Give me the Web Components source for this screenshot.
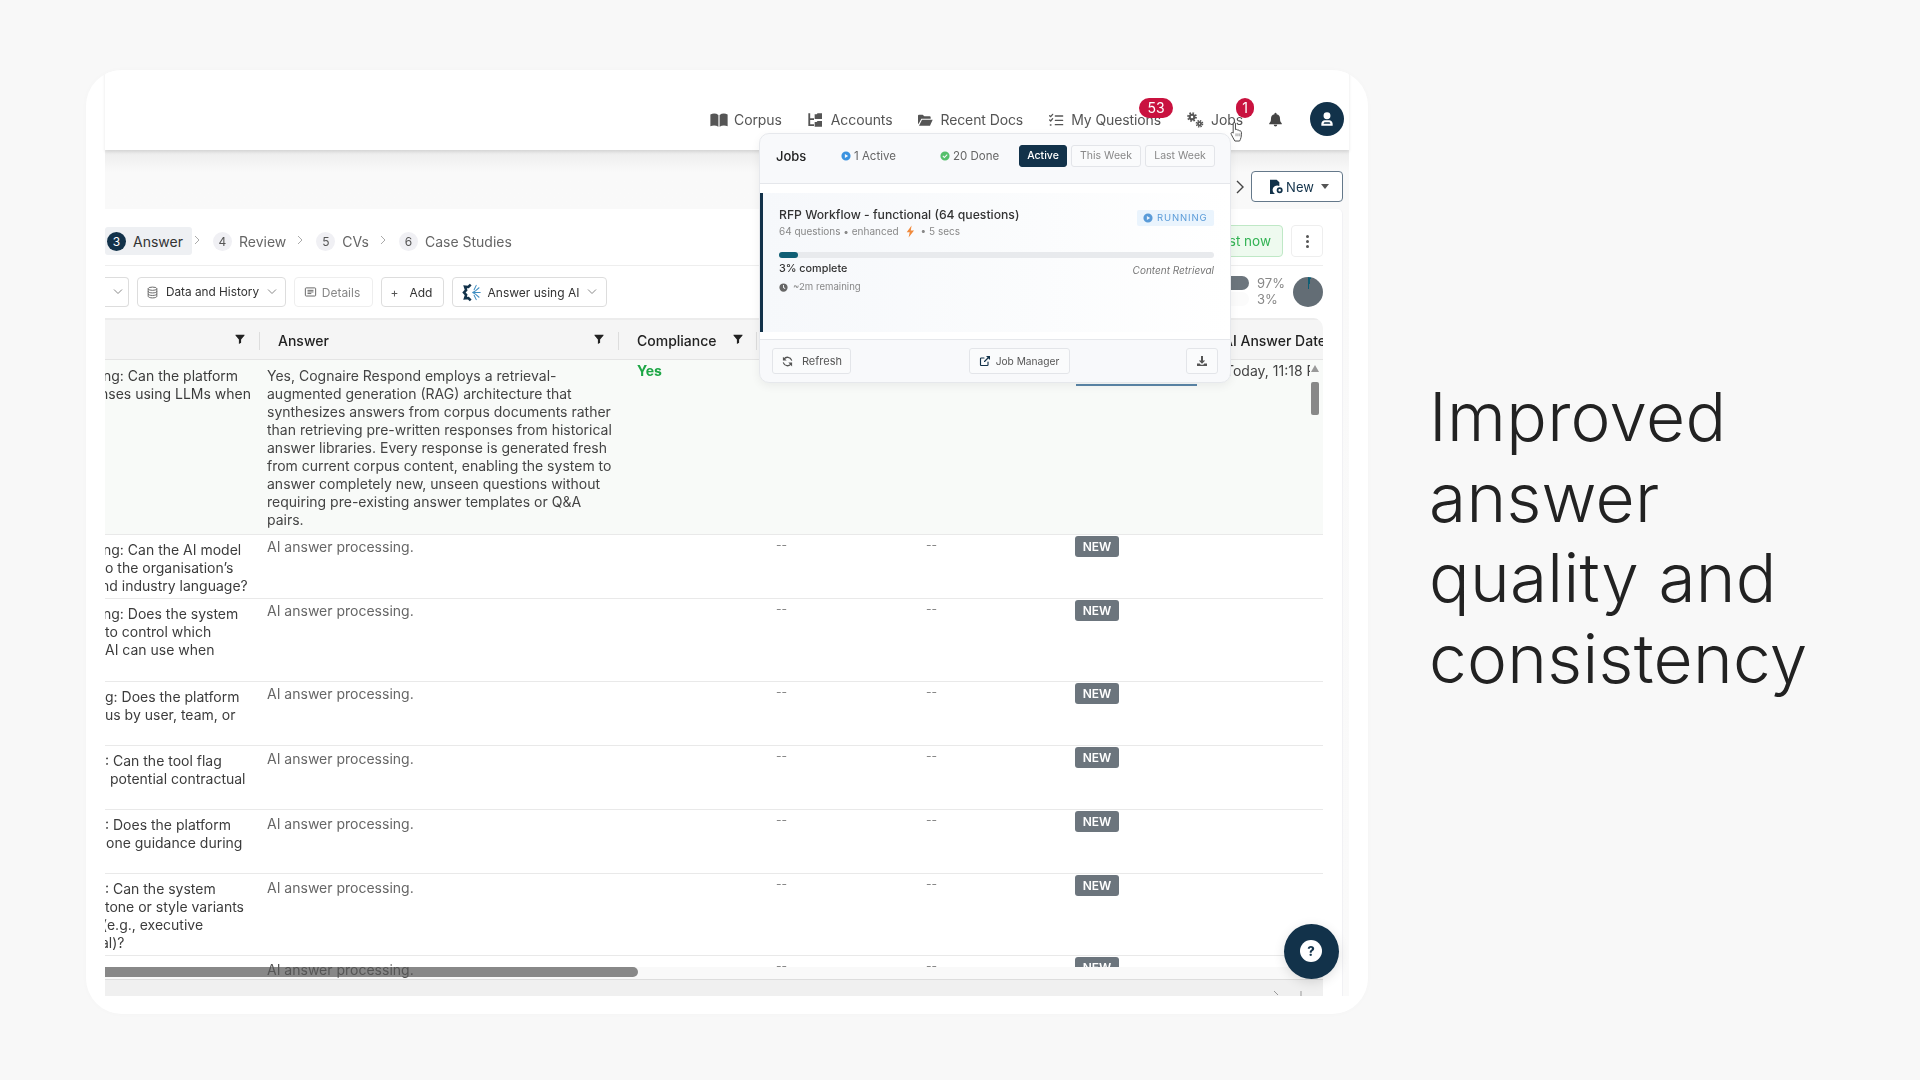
<!DOCTYPE html>
<html lang="en"><head><meta charset="utf-8"><title>Improved answer quality</title>
<style>
html,body{margin:0;padding:0;background:#f8f8f8}
body{font-family:Inter,"Liberation Sans",sans-serif;width:1920px;height:1080px;overflow:hidden}
</style></head><body>
<slide-page>
  <app-card>
    <top-nav>
      <nav-item icon="book" s="18" g="6">Corpus</nav-item>
      <nav-item icon="tree" s="16" g="8">Accounts</nav-item>
      <nav-item icon="folder" s="16" g="7">Recent Docs</nav-item>
      <nav-item icon="listcheck" s="16" g="7" badge="53" bw="34" br="-12">My Questions</nav-item>
      <nav-item icon="gears" s="18" g="7" badge="1" bw="18" br="-11">Jobs</nav-item>
    </top-nav>
    <work-area>
      <job-panel>
        <step-bar slot="steps">
          <step-item n="3" active>Answer</step-item>
          <step-item n="4">Review</step-item>
          <step-item n="5">CVs</step-item>
          <step-item n="6" last>Case Studies</step-item>
        </step-bar>
        <tool-bar slot="tools">
          <tool-btn w="24" cut caret></tool-btn>
          <tool-btn w="149" icon="db" caret style="font-size:11.800px">Data and History</tool-btn>
          <tool-btn w="79" icon="doc" off style="gap:5px;padding-right:3px">Details</tool-btn>
          <tool-btn w="63" plus style="padding-right:2px">Add</tool-btn>
          <tool-btn w="155" icon="ai" caret>Answer using AI</tool-btn>
        </tool-bar>
        <data-table slot="table">
          <data-row h="175" hl apad="7">
            <q-line o="-2">ng: Can the platform</q-line><q-line o="-5">nses using LLMs when</q-line>
            <span slot="answer">Yes, Cognaire Respond employs a retrieval-<br>augmented generation (RAG) architecture that<br>synthesizes answers from corpus documents rather<br>than retrieving pre-written responses from historical<br>answer libraries. Every response is generated fresh<br>from current corpus content, enabling the system to<br>answer completely new, unseen questions without<br>requiring pre-existing answer templates or Q&amp;A<br>pairs.</span>
            <b slot="comp">Yes</b>
            <span slot="tag" class="bar"></span>
            <span slot="date">Today, 11:18 PM</span>
          </data-row>
          <data-row h="64" proc new><q-line o="-2">ng: Can the AI model</q-line><q-line>o the organisation’s</q-line><q-line o="-4">nd industry language?</q-line></data-row>
          <data-row h="83" proc new><q-line o="-2">ng: Does the system</q-line><q-line>to control which</q-line><q-line>AI can use when</q-line></data-row>
          <data-row h="64" proc new><q-line>g: Does the platform</q-line><q-line>us by user, team, or</q-line></data-row>
          <data-row h="64" proc new apad="4"><q-line>: Can the tool flag</q-line><q-line o="5">potential contractual</q-line></data-row>
          <data-row h="64" proc new apad="5"><q-line>: Does the platform</q-line><q-line o="1">one guidance during</q-line></data-row>
          <data-row h="82" proc new apad="5"><q-line>: Can the system</q-line><q-line>tone or style variants</q-line><q-line o="-3">(e.g., executive</q-line><q-line o="-4">al)?</q-line></data-row>
          <data-row h="12" dashes new></data-row>
        </data-table>
      </job-panel>
    </work-area>
    <jobs-popup></jobs-popup>
    <hand-cursor></hand-cursor>
    <help-fab></help-fab>
  </app-card>
  <hero-text>Improved<br>answer<br>quality and<br>consistency</hero-text>
</slide-page>
<script>
const ICONS={
book:'<path d="M.500 4.500c3.800-1.500 7.700-1.400 10.700.7V21c-3-1.900-6.900-2-10.700-.8zM12.800 5.200C15.800 3.100 19.700 3 23.500 4.500v15.700c-3.800-1.200-7.700-1.100-10.700.8z"/>',
tree:'<path d="M2 2h2.800v7.500H10.500v2.600H4.800v6.400H10.500v2.600H2z"/><path d="M11.500 3.500h3l1.300-1.500H22.500v8.500H11.500zM11.500 15h3l1.300-1.500H22.500V22H11.500z"/>',
folder:'<path d="M1.500 5.500A1.500 1.500 0 0 1 3 4h5.500l2.500 2.500h8a1.500 1.500 0 0 1 1.500 1.500v2H6.500L2.500 17.500h-1z"/><path d="M7.500 11.500H23.500L19.500 20.500H3z"/>',
listcheck:'<g fill="none" stroke="currentColor" stroke-width="2" stroke-linecap="round" stroke-linejoin="round"><path d="M2.500 5.500 4 7l3-3.500M2.500 12 4 13.500l3-3.500M3.500 19.500h1M11 6h11M11 12.500h11M11 19h11"/></g>',
gears:'<g fill="none" stroke="currentColor"><circle cx="8" cy="8" r="3.100" stroke-width="2.800"/><circle cx="8" cy="8" r="5.300" stroke-width="2.400" stroke-dasharray="2.100 2.060"/><circle cx="18" cy="17" r="2.100" stroke-width="2.400"/><circle cx="18" cy="17" r="4" stroke-width="2.200" stroke-dasharray="1.800 1.340"/></g>',
bell:'<path d="M12 1a1.700 1.700 0 0 0-1.700 1.700v1A7 7 0 0 0 4.800 10.700c0 4.300-1.300 5.800-2.800 7.300v1.500h20V18c-1.500-1.500-2.800-3-2.800-7.300A7 7 0 0 0 13.700 3.700v-1A1.700 1.700 0 0 0 12 1zM9.200 20.500a2.800 2.800 0 0 0 5.600 0z"/>',
user:'<path fill-rule="evenodd" d="M12 2a5.200 5.200 0 1 1 0 10.400A5.200 5.200 0 0 1 12 2zM3.500 22v-2.800c0-3.200 2.600-5.500 5.200-5.500h6.600c2.600 0 5.200 2.300 5.200 5.500V22zM7 18.900v.1h10v-.1c0-1.300-.9-2.200-2.200-2.200H9.200C7.900 16.700 7 17.600 7 18.900z"/>',
filter:'<path d="M3 3.500h18v1.500l-6.800 8v6.500L9.800 22v-9L3 5z"/>',
db:'<g fill="none" stroke="currentColor" stroke-width="1.800"><ellipse cx="12" cy="5" rx="8" ry="3"/><path d="M4 5v14c0 1.700 3.600 3 8 3s8-1.300 8-3V5M4 9.800c0 1.700 3.600 3 8 3s8-1.300 8-3M4 14.500c0 1.700 3.600 3 8 3s8-1.300 8-3"/></g>',
doc:'<g fill="none" stroke="currentColor" stroke-width="1.800"><rect x="2.500" y="3.500" width="19" height="15" rx="1.500"/><path d="M6.500 8h11M6.500 11h11M6.500 14h7"/></g>',
ai:'<g fill="none" stroke="#12324a" stroke-width="3.200" stroke-linejoin="miter"><path d="M11 2 8 5 3.800 4.600 5.200 9 2.500 12l2.700 3-1.400 4.400L8 19l3 3"/></g><g fill="none" stroke="#3f8ec2" stroke-width="1.300" stroke-linecap="round"><path d="M23 12h-6.500l-3 0M21.500 6 17 10l-3.500 2M21.500 18 17 14l-3.500-2M18 3l-2.700 5.500M18 21l-2.700-5.500"/></g>',
sync:'<g fill="none" stroke="currentColor" stroke-width="2.400" stroke-linecap="round"><path d="M19.500 9.500A8 8 0 0 0 5.500 7.500M4.500 14.500a8 8 0 0 0 14 2"/></g><path d="M3.500 3v7h7zM20.500 21v-7h-7z"/>',
ext:'<g fill="none" stroke="currentColor" stroke-width="2.300" stroke-linecap="round"><path d="M18 14v5.500a1.500 1.500 0 0 1-1.500 1.500h-12A1.500 1.500 0 0 1 3 19.500v-12A1.500 1.500 0 0 1 4.500 6H10M11 13 21 3"/></g><path d="M14 2h8v8z"/>',
dl:'<path d="M10 2h4v9h4.500L12 17.500 5.500 11H10z"/><path d="M2 17h5.500l2 2.500h5l2-2.500H22v5H2z"/>',
clock:'<path fill-rule="evenodd" d="M12 1a11 11 0 1 1 0 22 11 11 0 0 1 0-22zm-1.200 4.500v7.100l5 3.200 1.200-1.900-3.800-2.400v-6z"/>',
play:'<path fill-rule="evenodd" d="M12 1a11 11 0 1 1 0 22 11 11 0 0 1 0-22zM9.300 7v10l8-5z"/>',
check:'<path fill-rule="evenodd" d="M12 1a11 11 0 1 1 0 22 11 11 0 0 1 0-22zm-1.600 16.200 7.800-7.800-1.800-1.800-6 6-2.700-2.700-1.800 1.800z"/>',
bolt:'<path fill="#f08a3c" d="M14 1 5 13.500h5.500L8.500 23l10-13h-6z"/>',
filenew:'<path d="M3 1h10l4 4v5.500a6.800 6.800 0 0 0-6.500 12H3z"/><g fill="none" stroke="currentColor"><circle cx="17.500" cy="17" r="3.200" stroke-width="2.600"/></g>',
};
function def(tag,css,html,setup){
  customElements.define(tag,class extends HTMLElement{
    constructor(){super();this.attachShadow({mode:'open'});}
    connectedCallback(){
      const h=typeof html==='function'?html(this):html;
      this.shadowRoot.innerHTML='<style>'+css+'</style>'+h;
      if(setup)setup(this);
    }
  });
}
def('ui-icon',':host{display:inline-flex;flex:none;line-height:0}svg{display:block;fill:currentColor}',
  e=>{const s=e.getAttribute('s')||14;return `<svg viewBox="0 0 24 24" width="${s}" height="${s}">${ICONS[e.getAttribute('n')]||''}</svg>`});
def('slide-page',':host{display:flex;padding:70px 0 66px 86px;box-sizing:border-box;width:1920px;height:1080px;color:#222}','<slot></slot>');
def('hero-text',':host{display:block;align-self:center;margin:-8px 0 0 61px;font:300 67.500px/80.500px Inter,sans-serif;color:#222;white-space:nowrap;letter-spacing:.3px}','<slot></slot>');
def('app-card',':host{display:flex;flex-direction:column;position:relative;flex:none;width:1282px;height:944px;background:#fff;border-radius:36px;overflow:hidden;padding:0 19px 18px;box-sizing:border-box;box-shadow:0 0 6px rgba(0,0,0,.02);filter:blur(.35px)}','<slot></slot>');
def('top-nav',`:host{display:flex;justify-content:flex-end;align-items:center;gap:25px;height:80px;padding:20px 5px 0 0;box-sizing:border-box;position:relative;z-index:2;box-shadow:0 2px 3px rgba(0,0,0,.1);background:#fff;flex:none;font:400 14px/20px Inter,sans-serif;letter-spacing:-.1px;color:#555}
.bell{color:#444;margin:-2px 27px 0 0;display:flex}.av{width:34px;height:34px;margin:-2px 0 0 -25px;border-radius:50%;background:#12324a;color:#fff;display:flex;align-items:center;justify-content:center}`,
 '<slot></slot><span class="bell"><ui-icon n="bell" s="15"></ui-icon></span><span class="av"><ui-icon n="user" s="16"></ui-icon></span>');
def('nav-item',`:host{display:inline-flex;align-items:center;position:relative;white-space:nowrap;height:20px}
.b{position:absolute;top:-12px;height:20px;border-radius:10px;background:#c9123f;color:#fff;font:400 14px/20px Inter,sans-serif;text-align:center}`,
 e=>{const b=e.getAttribute('badge');return `<ui-icon n="${e.getAttribute('icon')}" s="${e.getAttribute('s')}" style="margin-right:${e.getAttribute('g')}px"></ui-icon><span><slot></slot></span>`+(b?`<span class="b" style="width:${e.getAttribute('bw')}px;right:${e.getAttribute('br')}px">${b}</span>`:'')});
def('work-area',`:host{display:flex;flex-direction:column;flex:1;min-height:0;background:linear-gradient(#ececec,#f9f9f9 22px,#fafafa);}
.top{display:flex;justify-content:flex-end;align-items:center;gap:6px;height:59px;padding:21px 6px 7px 0;box-sizing:border-box;flex:none;color:#444}
.new{display:flex;align-items:center;justify-content:center;gap:2px;width:92px;height:31px;box-sizing:border-box;padding-left:3px;border:1.500px solid #64788a;border-radius:4px;background:#fff;font:400 13px Inter,sans-serif;color:#12324a}
.c{width:0;height:0;border:4px solid transparent;border-top:5px solid #555;border-bottom:0;margin-left:5px}`,
 `<div class="top"><svg width="10" height="14" viewBox="0 0 10 14" fill="none" stroke="#444" stroke-width="1.400"><path d="M2 1l6 6-6 6"/></svg><span class="new"><ui-icon n="filenew" s="16"></ui-icon>New<span class="c"></span></span></div><slot></slot>`);
def('job-panel',`:host{display:flex;flex-direction:column;flex:1;min-height:0;margin-right:6px;background:#fff;border-right:1px solid #f1f1f4;padding:16px 19px 0 0;border-radius:0 5px 0 0;overflow:hidden;position:relative}
.row{display:flex;justify-content:space-between;align-items:center;flex:none}
.one{height:32px;padding-bottom:8px;border-bottom:1px solid #eee}
.two{height:30px;margin:11px 0}
.now{width:93px;height:32px;box-sizing:border-box;background:#eefaef;border:1px solid #bfe8c6;border-radius:4px;color:#33b354;font:400 13.500px/30px Inter,sans-serif;text-align:right;padding-right:11px}
.keb{width:32px;height:32px;box-sizing:border-box;border:1px solid #eee;border-radius:4px;display:flex;flex-direction:column;gap:2px;align-items:center;justify-content:center}
.keb i{width:3px;height:3px;border-radius:50%;background:#555}
.rt{display:flex;gap:8px;align-items:center}
.pc{display:grid;grid-template-columns:60px auto;column-gap:8px;align-items:center;margin-top:-3px;font:400 13px/16px Inter,sans-serif;color:#888}
.d{height:14px;background:#6c757d;border-radius:0 7px 7px 0}.l{height:14px;background:#fbfbfb;border-radius:0 7px 7px 0}
.pie{width:30px;height:30px;border-radius:50%;background:conic-gradient(#0f5e74 0 3%,#636d75 3% 100%)}
.act{display:flex;gap:8px}`,
 `<div class="row one"><slot name="steps"></slot><div class="act"><span class="now">st now</span><span class="keb"><i></i><i></i><i></i></span></div></div>
 <div class="row two"><slot name="tools"></slot><div class="rt"><div class="pc"><span class="d"></span><span>97%</span><span class="l"></span><span>3%</span></div><span class="pie"></span></div></div><slot name="table"></slot>`);
def('step-bar',':host{display:flex;align-items:center}','<slot></slot>');
def('step-item',`:host{display:inline-flex;align-items:center}
.i{display:inline-flex;align-items:center;gap:7px;height:28px;padding:0 9px 0 2px;border-radius:3px;font:400 14px Inter,sans-serif;color:#666;white-space:nowrap}
.a{background:#eef0f3;color:#333}
.n{width:19px;height:19px;border-radius:50%;background:#f0f0f4;color:#555;font:400 12px/19px Inter,sans-serif;text-align:center}
.a .n{background:#12324a;color:#fff}
svg{margin:-2px 10px 0 1px}`,
 e=>`<span class="i ${e.hasAttribute('active')?'a':''}"><span class="n">${e.getAttribute('n')}</span><span><slot></slot></span></span>`+(e.hasAttribute('last')?'':`<svg width="8" height="10" viewBox="0 0 8 10" fill="none" stroke="#aaa" stroke-width="1"><path d="M2 1l4 4-4 4"/></svg>`));
def('tool-bar',':host{display:flex;gap:8px;align-items:center}','<slot></slot>');
def('tool-btn',`:host{display:inline-flex;align-items:center;justify-content:center;gap:7px;height:30px;box-sizing:border-box;border:1px solid #ddd;border-radius:4px;font:400 12px Inter,sans-serif;color:#333;background:#fff;white-space:nowrap}
:host([off]){color:#888;border-color:#eee}:host([cut]){border-left:0;border-radius:0 4px 4px 0;padding-right:5px}
ui-icon{color:#666}svg{margin-left:1px}`,
 e=>{e.style.width=e.getAttribute('w')+'px';const ic=e.getAttribute('icon');const s=ic==='ai'?19:13;
  return (e.hasAttribute('plus')?'<span style="margin-right:4px;color:#555">+</span>':'')+(ic?`<ui-icon n="${ic}" s="${s}"></ui-icon>`:'')+'<span><slot></slot></span>'+(e.hasAttribute('caret')?'<svg width="10" height="6" viewBox="0 0 10 6" fill="none" stroke="#888" stroke-width="1"><path d="M1 .5l4 4 4-4"/></svg>':'')});
const COLS='155px 359px 138px 151px 152px 162px minmax(0,1fr)';
def('data-table',`:host{display:flex;flex-direction:column;flex:1;min-height:0;position:relative;border-radius:0 10px 0 0;overflow:hidden;font:400 14px/18px Inter,sans-serif}
.hd{display:grid;grid-template-columns:${COLS};height:42px;box-sizing:border-box;background:#f5f5f5;border-top:2px solid #ececec;border-bottom:1px solid #e4e4e4;flex:none;font:500 14px/38px Inter,sans-serif;color:#222;white-space:nowrap}
.h{display:flex;align-items:center;position:relative;padding:2px 0 0 18px;overflow:hidden}
.h ui-icon{position:absolute;right:14px;top:13px;color:#222}
.h.s::after{content:"";position:absolute;right:0;top:12px;height:18px;width:1px;background:#ddd}
.body{height:607px;overflow:hidden;flex:none}
.band{position:relative;height:13px;flex:none;background:#f9f9f9;border-bottom:1px solid #ddd;box-sizing:border-box}
.sb{position:absolute;left:0;top:0;width:533px;height:10px;background:#888;border-radius:0 5px 5px 0}
.ap{position:absolute;left:162px;top:-6px;color:#555}
.foot{height:16px;flex:none;background:#f0f0f0;position:relative}
.foot svg{position:absolute;right:10px;bottom:0}
.up{position:absolute;right:4px;top:47px;width:0;height:0;border:4.500px solid transparent;border-bottom:7px solid #999;border-top:0}
.th{position:absolute;right:4px;top:64px;width:8px;height:33px;background:#888;border-radius:2px}`,
 `<div class="hd"><div class="h s"><ui-icon n="filter" s="12"></ui-icon></div><div class="h s">Answer<ui-icon n="filter" s="12"></ui-icon></div><div class="h s">Compliance<ui-icon n="filter" s="12" style="right:13px"></ui-icon></div><div class="h"></div><div class="h"></div><div class="h"></div><div class="h" style="padding-left:1px">AI Answer Date</div></div>
 <div class="body"><slot></slot></div>
 <div class="band"><span class="sb"></span><span class="ap">AI answer processing.</span></div>
 <div class="foot"><svg width="40" height="5" viewBox="0 0 40 5" fill="none" stroke="#999" stroke-width="1"><path d="M1 0l4 4M28 0v5"/></svg></div>
 <span class="up"></span><span class="th"></span>`);
def('data-row',`:host{display:grid;grid-template-columns:${COLS};box-sizing:border-box;border-bottom:1px solid #e9e9e9;color:#444;overflow:hidden}
:host([hl]){background:#f8faf8}
.q{padding-top:6px;overflow:hidden;color:#3c3c3c;white-space:nowrap}
.a{padding:3px 0 0 7px;white-space:nowrap;color:#666}
:host([hl]) .a{color:#444}:host([hl]) .q{padding-top:7px}
.c{padding:2px 0 0 18px;color:#1ea646}
.dd{padding:1px 0 0 19px;color:#888;font-size:12px;line-height:18px}
.t{padding:1px 0 0 15px}
.nw{display:inline-block;width:44px;height:21px;border-radius:3px;background:#6c757d;color:#fff;font:600 12px/21px Inter,sans-serif;text-align:center}
.dt{padding:2px 0 0 3px;margin-right:13px;overflow:hidden;white-space:nowrap;color:#444}
::slotted(.bar){display:block;width:121px;height:23px;margin-left:1px;border-bottom:2px solid #5b86a8}`,
 e=>{const p=e.hasAttribute('proc'),nw=e.hasAttribute('new'),d=p||e.hasAttribute('dashes');e.style.height=e.getAttribute('h')+'px';const ap=e.getAttribute('apad')||3;
 return `<div class="q"><slot></slot></div><div class="a" style="padding-top:${ap}px">${p?'AI answer processing.':'<slot name="answer"></slot>'}</div><div class="c"><slot name="comp"></slot></div><div class="dd">${d?'--':''}</div><div class="dd" style="padding-left:18px">${d?'--':''}</div><div class="t">${nw?'<span class="nw">NEW</span>':'<slot name="tag"></slot>'}</div><div class="dt"><slot name="date"></slot></div>`});
def('q-line',':host{display:block;height:18px;white-space:nowrap}',
 e=>{e.style.marginLeft=(e.getAttribute('o')||0)+'px';return '<slot></slot>'});
def('jobs-popup',`:host{position:absolute;left:673px;top:63px;width:472px;height:250px;box-sizing:border-box;z-index:5;border:1px solid #e6e8ec;border-radius:10px;background:#f8f9fb;box-shadow:0 3px 10px rgba(0,0,0,.06);overflow:hidden;display:flex;flex-direction:column;font:400 11px/14px Inter,sans-serif;color:#555}
.hd{display:grid;grid-template-columns:64px 100px 79px auto;align-items:center;height:50px;padding:0 0 5px 16px;box-sizing:border-box;border-bottom:1px solid #e5e7eb;flex:none}
.j{font:500 13px Inter,sans-serif;color:#222}.g{display:flex;align-items:center;gap:3px;font-size:11.500px;color:#666}
.tabs{display:flex;gap:4px}.tb{height:22px;box-sizing:border-box;border:1px solid #e3e5e9;border-radius:3px;color:#888;font:400 10.500px/20px Inter,sans-serif;text-align:center;background:#fafbfc;width:70px}
.tb.on{background:#12324a;border-color:#12324a;color:#fff;width:48px;font-weight:500}
.mid{flex:1;background:#fff;padding:9px 0 7px;display:flex;border-bottom:1px solid #e5e7eb}
.card{flex:1;border-left:3px solid #12324a;padding:14px 16px 0;background:linear-gradient(90deg,#f6f8fb,#fbfcfd 60%,#fff);display:flex;flex-direction:column}
.tr{display:flex;justify-content:space-between;align-items:flex-start;height:32px}
.t{font:500 12.200px/16px Inter,sans-serif;color:#333}
.s{font:400 10px/14px Inter,sans-serif;color:#888;margin-top:1px;display:flex;align-items:center;gap:4px}
.run{display:flex;align-items:center;gap:4px;width:77px;height:16px;margin-top:3px;box-sizing:border-box;padding-left:6px;background:#eaf4fd;border-radius:2px;color:#5a9bd8;font:400 9.500px/16px Inter,sans-serif;letter-spacing:.9px}
.pg{height:6px;border-radius:3px;background:#e8eaed;margin-top:13px}.pg i{display:block;width:19px;height:6px;border-radius:3px;background:#0f5e74}
.st{display:flex;justify-content:space-between;margin-top:4px}.st b{font:500 10.800px/14px Inter,sans-serif;color:#333}.st em{font:italic 400 10px/14px Inter,sans-serif;color:#777;margin-top:1px}
.rem{display:flex;gap:5px;align-items:center;font-size:9.600px;color:#888;margin-top:3px}
.ft{height:42px;flex:none;display:flex;justify-content:space-between;align-items:center;padding:0 12px;box-sizing:border-box}
.b{height:26px;box-sizing:border-box;display:flex;align-items:center;justify-content:center;gap:5px;border:1px solid #e3e5e9;border-radius:3px;background:#fafbfc;font:400 11px Inter,sans-serif;color:#555}`,
 `<div class="hd"><span class="j">Jobs</span><span class="g" style="margin-left:1px"><ui-icon n="play" s="10" style="color:#3b93e0"></ui-icon>1 Active</span><span class="g"><ui-icon n="check" s="10" style="color:#55c06b"></ui-icon>20 Done</span><span class="tabs"><span class="tb on">Active</span><span class="tb">This Week</span><span class="tb">Last Week</span></span></div>
 <div class="mid"><div class="card"><div class="tr"><div><div class="t">RFP Workflow - functional (64 questions)</div><div class="s">64 questions • enhanced <ui-icon n="bolt" s="13" style="margin:0 0 0 1px"></ui-icon> • 5 secs</div></div><div class="run"><ui-icon n="play" s="10"></ui-icon>RUNNING</div></div>
 <div class="pg"><i></i></div><div class="st"><b>3% complete</b><em>Content Retrieval</em></div><div class="rem"><ui-icon n="clock" s="9" style="color:#666"></ui-icon>~2m remaining</div></div></div>
 <div class="ft"><span class="b" style="width:79px;gap:8px"><ui-icon n="sync" s="13"></ui-icon>Refresh</span><span class="b" style="width:101px;margin-left:1px;font-size:10.200px"><ui-icon n="ext" s="12" style="color:#12324a"></ui-icon>Job Manager</span><span class="b" style="width:32px"><ui-icon n="dl" s="12"></ui-icon></span></div>`);
def('hand-cursor',':host{position:absolute;left:1144px;top:51px;z-index:6;line-height:0}',
 '<svg width="14" height="21" viewBox="0 0 14 22"><path d="M4 1.500c.8 0 1.400.6 1.400 1.500v6l1-.2c.8 0 1.200.4 1.300.8.800-.3 1.600 0 1.800.7.800-.2 1.800.2 2 1 .3 1 .2 4-.3 6-.4 1.600-1 2.800-1.500 3.700H4.800C3.800 19 2 16.500 1 14c-.4-1-.2-1.600.4-1.900.6-.3 1.200 0 1.600.6V3c0-.9.300-1.500 1-1.500z" fill="#fff" stroke="#444" stroke-width="1"/><path d="M6 13v3M8 13v3M10 13v3" stroke="#777" stroke-width=".8"/></svg>');
def('help-fab',`:host{position:absolute;left:1197.500px;top:853.500px;width:55px;height:55px;border-radius:50%;background:#12324a;display:flex;align-items:center;justify-content:center;box-shadow:0 3px 12px rgba(0,0,0,.12);z-index:6}
span{width:22px;height:22px;border-radius:50%;background:#fff;color:#12324a;font:800 13px/22px Inter,sans-serif;text-align:center}`,'<span>?</span>');
</script>
</body></html>
